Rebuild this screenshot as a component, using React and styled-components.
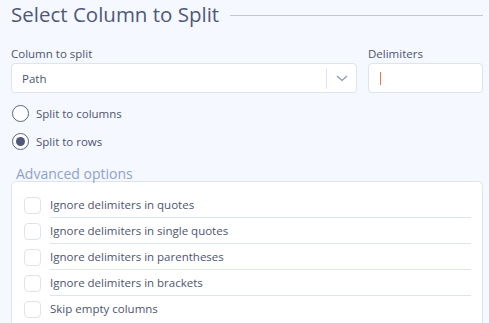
import React, { useState } from "react";
import styled, { createGlobalStyle } from "styled-components";

const Global = createGlobalStyle`
  html, body {
    margin: 0;
    background: #f5f8fe;
  }
  body {
    font-family: "Open Sans", "Noto Sans", sans-serif;
    color: #4d5570;
  }
`;

const Page = styled.div`
  padding: 2px 6px 0 11px;
  overflow: hidden;
  height: 323px;
  box-sizing: border-box;
`;

const Header = styled.div`
  display: flex;
  align-items: center;
  gap: 11px;
  height: 24px;
`;

const Title = styled.h1`
  margin: 0;
  font-size: 20.5px;
  font-weight: 400;
  color: #4f587a;
  white-space: nowrap;
  line-height: 24px;
`;

const Rule = styled.div`
  flex: 1;
  height: 1px;
  background: #c3c7cf;
  margin-top: 2px;
`;

const Fields = styled.div`
  display: grid;
  grid-template-columns: 1fr 115px;
  gap: 11px;
  margin-top: 20px;
`;

const Field = styled.div`
  display: flex;
  flex-direction: column;
`;

const Label = styled.label`
  font-size: 11.5px;
  line-height: 16px;
  color: #4d5570;
  margin-bottom: 1px;
`;

const Box = styled.div`
  height: 30px;
  box-sizing: border-box;
  background: #fff;
  border: 1px solid #dde3ef;
  border-radius: 4px;
  display: flex;
  align-items: center;
  font-size: 11.5px;
`;

const SelectValue = styled.span`
  flex: 1;
  padding-left: 10px;
  color: #4d5570;
`;

const Chevron = styled.span`
  width: 29px;
  height: 21px;
  border-left: 1px solid #dde3ef;
  display: flex;
  align-items: center;
  justify-content: center;
`;

const Caret = styled.span`
  width: 1px;
  height: 13px;
  background: #e07a56;
  margin-left: 11px;
`;

const Radios = styled.div`
  display: flex;
  flex-direction: column;
  gap: 11px;
  margin-top: 12px;
`;

const RadioRow = styled.div`
  display: flex;
  align-items: center;
  gap: 7px;
  padding-left: 1px;
  font-size: 11.5px;
  cursor: pointer;
`;

const Circle = styled.span`
  width: 17px;
  height: 17px;
  box-sizing: border-box;
  border-radius: 50%;
  border: 1.5px solid #5b6480;
  background: #fff;
  display: flex;
  align-items: center;
  justify-content: center;
  &::after {
    content: "";
    width: 9px;
    height: 9px;
    border-radius: 50%;
    background: #4f5878;
    display: ${(p) => (p.checked ? "block" : "none")};
  }
`;

const Legend = styled.div`
  font-size: 14px;
  line-height: 14px;
  color: #8fa2c9;
  margin-top: 17px;
  padding-left: 5px;
`;

const Options = styled.div`
  background: #fff;
  border: 1px solid #dde3ef;
  border-radius: 5px;
  padding: 10px 11px 0 12px;
  height: 200px;
`;

const OptionRow = styled.div`
  display: flex;
  align-items: center;
  gap: 9px;
  height: 26px;
  font-size: 11.5px;
  cursor: pointer;
`;

const Check = styled.span`
  width: 17px;
  height: 17px;
  box-sizing: border-box;
  border: 1px solid #dde3ef;
  border-radius: 4px;
  flex-shrink: 0;
  background: ${(p) => (p.checked ? "#4f5878" : "#fff")};
`;

const OptionText = styled.span`
  flex: 1;
  height: 26px;
  line-height: 26px;
  border-bottom: ${(p) => (p.last ? "none" : "1px solid #dde3ef")};
  box-sizing: border-box;
  color: #4d5570;
`;

const options = [
  "Ignore delimiters in quotes",
  "Ignore delimiters in single quotes",
  "Ignore delimiters in parentheses",
  "Ignore delimiters in brackets",
  "Skip empty columns",
];

export default function App() {
  const [mode, setMode] = useState("rows");
  const [checked, setChecked] = useState({});

  return (
    <>
      <Global />
      <Page>
        <Header>
          <Title>Select Column to Split</Title>
          <Rule />
        </Header>

        <Fields>
          <Field>
            <Label>Column to split</Label>
            <Box>
              <SelectValue>Path</SelectValue>
              <Chevron>
                <svg width="12" height="7" viewBox="0 0 12 7">
                  <path d="M1 1l5 4.5L11 1" fill="none" stroke="#8c98b4" strokeWidth="1.3" />
                </svg>
              </Chevron>
            </Box>
          </Field>
          <Field>
            <Label>Delimiters</Label>
            <Box>
              <Caret />
            </Box>
          </Field>
        </Fields>

        <Radios>
          <RadioRow onClick={() => setMode("columns")}>
            <Circle checked={mode === "columns"} />
            Split to columns
          </RadioRow>
          <RadioRow onClick={() => setMode("rows")}>
            <Circle checked={mode === "rows"} />
            Split to rows
          </RadioRow>
        </Radios>

        <Legend>Advanced options</Legend>
        <Options>
          {options.map((o, i) => (
            <OptionRow key={o} onClick={() => setChecked({ ...checked, [i]: !checked[i] })}>
              <Check checked={checked[i]} />
              <OptionText last={i === options.length - 1}>{o}</OptionText>
            </OptionRow>
          ))}
        </Options>
      </Page>
    </>
  );
}
